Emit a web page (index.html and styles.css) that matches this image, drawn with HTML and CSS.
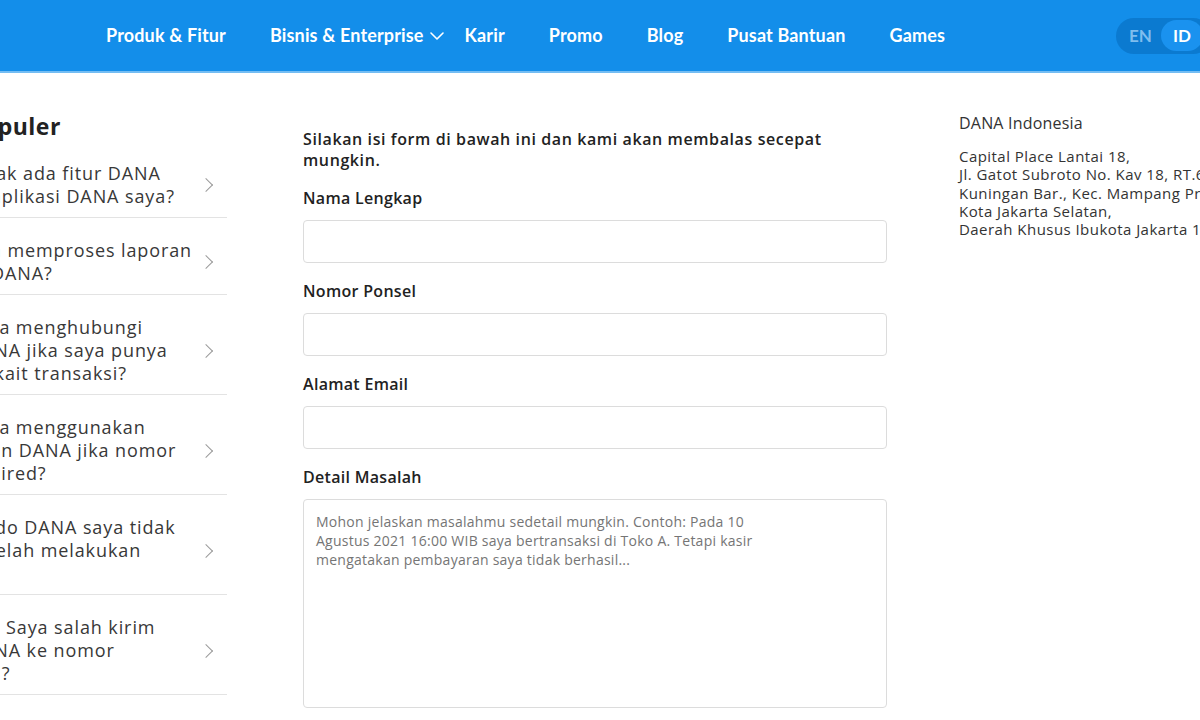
FILE: index.html
```html
<!DOCTYPE html>
<html lang="id">
<head>
  <meta charset="UTF-8">
  <title>Pusat Bantuan - Hubungi Kami</title>
  <link rel="stylesheet" href="styles.css">
</head>
<body>
  <header class="topbar">
    <nav class="nav">
      <a href="#" class="nav-link">Produk &amp; Fitur</a>
      <a href="#" class="nav-link has-drop">Bisnis &amp; Enterprise
        <svg class="drop-icon" width="14" height="8" viewBox="0 0 14 8"><path d="M1 1l6 6 6-6" fill="none" stroke="#fff" stroke-width="1.6" stroke-linecap="round" stroke-linejoin="round"/></svg>
      </a>
      <a href="#" class="nav-link">Karir</a>
      <a href="#" class="nav-link">Promo</a>
      <a href="#" class="nav-link">Blog</a>
      <a href="#" class="nav-link">Pusat Bantuan</a>
      <a href="#" class="nav-link">Games</a>
    </nav>
    <div class="lang">
      <span class="lang-opt">EN</span>
      <span class="lang-opt active">ID</span>
    </div>
  </header>

  <main class="page">
    <aside class="faq">
      <h2 class="faq-title">Populer</h2>
      <a href="#" class="faq-item"><span>Tidak ada fitur DANA<br>di aplikasi DANA saya?</span><i class="chev"></i></a>
      <a href="#" class="faq-item"><span>Tim memproses laporan<br>di DANA?</span><i class="chev"></i></a>
      <a href="#" class="faq-item"><span>Cara menghubungi<br>DANA jika saya punya<br>terkait transaksi?</span><i class="chev"></i></a>
      <a href="#" class="faq-item"><span>Cara menggunakan<br>akun DANA jika nomor<br>expired?</span><i class="chev"></i></a>
      <a href="#" class="faq-item"><span>Saldo DANA saya tidak<br>setelah melakukan<br>isi</span><i class="chev"></i></a>
      <a href="#" class="faq-item"><span>Jika Saya salah kirim<br>DANA ke nomor<br>lain?</span><i class="chev"></i></a>
    </aside>

    <form class="contact-form">
      <p class="intro">Silakan isi form di bawah ini dan kami akan membalas secepat mungkin.</p>
      <label class="field">
        <span class="field-label">Nama Lengkap</span>
        <input type="text" class="input">
      </label>
      <label class="field">
        <span class="field-label">Nomor Ponsel</span>
        <input type="tel" class="input">
      </label>
      <label class="field">
        <span class="field-label">Alamat Email</span>
        <input type="email" class="input">
      </label>
      <label class="field">
        <span class="field-label">Detail Masalah</span>
        <textarea class="input textarea" placeholder="Mohon jelaskan masalahmu sedetail mungkin. Contoh: Pada 10&#10;Agustus 2021 16:00 WIB saya bertransaksi di Toko A. Tetapi kasir&#10;mengatakan pembayaran saya tidak berhasil..."></textarea>
      </label>
    </form>

    <div class="address">
      <p class="company">DANA Indonesia</p>
      <p class="addr-lines">
        Capital Place Lantai 18,<br>
        Jl. Gatot Subroto No. Kav 18, RT.6/RW.1,<br>
        Kuningan Bar., Kec. Mampang Prpt.,<br>
        Kota Jakarta Selatan,<br>
        Daerah Khusus Ibukota Jakarta 12710
      </p>
    </div>
  </main>
</body>
</html>
```

FILE: styles.css
```css
body { margin: 0; font-family: "Open Sans", Arial, sans-serif; background: #fff; color: #333; overflow: hidden; }
a { text-decoration: none; color: inherit; }

/* header */
.topbar {
  height: 71px;
  background: #138eea;
  display: flex;
  align-items: center;
  padding-left: 106px;
  box-shadow: 0 2px 0 #74bdf3;
  overflow: hidden;
}
.nav { display: flex; align-items: center; gap: 44px; margin-top: -2px; }
.nav-link {
  color: #fff;
  font-family: Lato, "Open Sans", sans-serif;
  font-weight: 700;
  font-size: 18px;
  letter-spacing: 0.15px;
}
.has-drop { display: flex; align-items: center; gap: 6px; margin-right: -23px; }
.drop-icon { margin-top: 3px; }
.lang {
  margin-left: auto;
  margin-right: -11px;
  display: flex;
  align-items: center;
  background: #0b7ad0;
  border-radius: 20px;
  height: 36px;
  padding: 0 8px 0 13px;
  gap: 6px;
}
.lang-opt {
  font-family: Lato, sans-serif;
  font-weight: 700;
  font-size: 17px;
  color: #7fbdee;
  width: 26px;
}
.lang-opt.active {
  color: #fff;
  background: #1a92ef;
  border-radius: 18px;
  width: auto;
  padding: 5px 12px;
}

/* main columns */
.page {
  display: grid;
  grid-template-columns: 259px 584px 320px;
  column-gap: 76px;
  margin-left: -32px;
  padding-top: 40px;
}
.faq-title { margin: 0; font-size: 23px; font-weight: 700; color: #222; line-height: 30px; letter-spacing: 0.5px; }
.faq-item {
  display: flex;
  align-items: center;
  justify-content: space-between;
  padding: 21px 11px 9px 0;
  border-bottom: 1px solid #e3e3e3;
  font-size: 18px;
  line-height: 23px;
  font-weight: 500;
  letter-spacing: 0.9px;
  color: #383838;
  white-space: nowrap;
}
.chev {
  width: 9px;
  height: 9px;
  border-right: 1.5px solid #9a9a9a;
  border-top: 1.5px solid #9a9a9a;
  transform: rotate(45deg);
  margin-right: 5px;
  flex: none;
}

/* form */
.contact-form { display: flex; flex-direction: column; }
.intro { margin: 18px 0 16px; font-size: 16px; line-height: 21px; font-weight: 600; letter-spacing: 0.6px; color: #222; }
.field { display: flex; flex-direction: column; margin-bottom: 17px; }
.field-label { font-size: 16px; font-weight: 600; letter-spacing: 0.3px; color: #222; margin-bottom: 11px; }
.input {
  height: 43px;
  box-sizing: border-box;
  border: 1px solid #dcdcdc;
  border-radius: 4px;
  font-family: inherit;
  font-size: 15px;
  padding: 0 12px;
}
.textarea { height: 209px; padding: 12px; font-size: 14px; line-height: 19px; letter-spacing: 0.25px; resize: none; }
.textarea::placeholder { color: #757575; }

/* address */
.address { color: #333; white-space: nowrap; margin-left: -4px; }
.company { margin: 1px 0 13px; font-size: 16px; letter-spacing: 0.2px; }
.addr-lines { margin: 0; font-size: 15px; line-height: 18.3px; letter-spacing: 0.45px; }
```
